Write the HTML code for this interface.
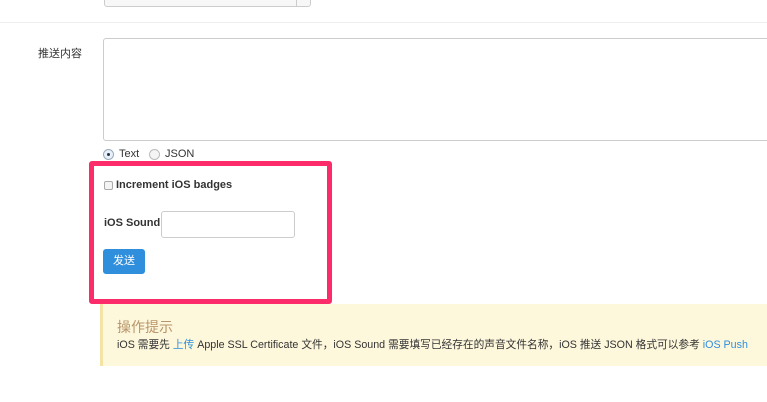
<!DOCTYPE html>
<html><head><meta charset="utf-8"><style>
body{margin:0;width:767px;height:402px;overflow:hidden;background:#fff;font-family:"Liberation Sans","Noto Sans CJK SC",sans-serif;font-size:12px;color:#333;position:relative}
.a{position:absolute}
</style></head><body>
<div class="a" style="left:104px;top:-6px;width:205px;height:11px;border:1px solid #ccc;border-radius:3px;background:#f7f7f7"></div>
<div class="a" style="left:296px;top:-6px;width:1px;height:12px;background:#ccc"></div>
<div class="a" style="left:0;top:22px;width:767px;height:1px;background:#eee"></div>
<div class="a" style="left:38px;top:45px;font-size:11px">推送内容</div>
<div class="a" style="left:103px;top:38px;width:680px;height:101px;border:1px solid #ccc;border-radius:3px"></div>
<div class="a" style="left:103px;top:149px;width:9px;height:9px;border:1px solid #9ab;border-radius:50%;background:#e8f0fb"></div>
<div class="a" style="left:107px;top:153px;width:3px;height:3px;border-radius:50%;background:#234"></div>
<div class="a" style="left:119px;top:148px;font-size:11px">Text</div>
<div class="a" style="left:149px;top:149px;width:9px;height:9px;border:1px solid #bbb;border-radius:50%;background:#f4f4f4"></div>
<div class="a" style="left:165px;top:148px;font-size:11px">JSON</div>
<div class="a" style="left:89px;top:161px;width:233px;height:133px;border:5px solid #fc2b6a;border-radius:3px"></div>
<div class="a" style="left:104px;top:181px;width:7px;height:7px;border:1px solid #aaa;border-radius:2px;background:#f4f4f4"></div>
<div class="a" style="left:116px;top:179px;font-size:11px;font-weight:bold">Increment iOS badges</div>
<div class="a" style="left:104px;top:217px;font-size:11px;font-weight:bold">iOS Sound</div>
<div class="a" style="left:161px;top:211px;width:132px;height:25px;border:1px solid #ccc;border-radius:3px"></div>
<div class="a" style="left:103px;top:249px;width:42px;height:25px;background:#2f8fdd;border-radius:3px;color:#fff;font-size:11px;line-height:25px;text-align:center">发送</div>
<div class="a" style="left:100px;top:304px;width:667px;height:62px;background:#fdf7dc;border-left:3px solid #f3e3a6;box-sizing:border-box"></div>
<div class="a" style="left:117px;top:317px;font-size:14px;color:#b8956a">操作提示</div>
<div class="a" style="left:117px;top:337px;font-size:10.7px;white-space:nowrap">iOS 需要先 <span style="color:#2f8fdd">上传</span> Apple SSL Certificate 文件，iOS Sound 需要填写已经存在的声音文件名称，iOS 推送 JSON 格式可以参考 <span style="color:#2f8fdd">iOS Push</span></div>
</body></html>
